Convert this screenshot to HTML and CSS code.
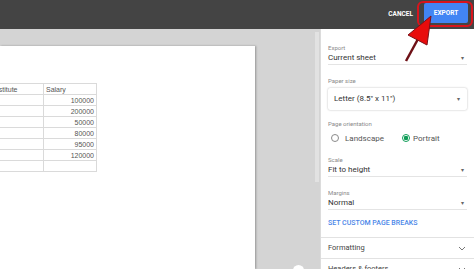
FILE: index.html
```html
<!doctype html>
<html lang="en">
<head>
	<meta charset="UTF-8">
	<title>Export</title>
	<link rel="stylesheet" href="styles.css">
</head>
<body>
	<div class="box">
		<header class="head">
			<span class="cancel">CANCEL</span>
			<span class="mark">
				<button class="export">EXPORT</button>
			</span>
		</header>

		<section class="main">
			<div class="preview">
				<div class="page_wrap">
					<div class="page">
						<table class="sheet">
							<tr><td class="name">Institute</td><td class="head_cell">Salary</td></tr>
							<tr><td class="name"></td><td class="num">100000</td></tr>
							<tr><td class="name"></td><td class="num">200000</td></tr>
							<tr><td class="name"></td><td class="num">50000</td></tr>
							<tr><td class="name"></td><td class="num">80000</td></tr>
							<tr><td class="name"></td><td class="num">95000</td></tr>
							<tr><td class="name"></td><td class="num">120000</td></tr>
							<tr><td class="name"></td><td class="num"></td></tr>
						</table>
					</div>
				</div>
				<div class="scroll"></div>
				<div class="fab"></div>
			</div>

			<aside class="panel">
				<div class="settings">
					<p class="label first">Export</p>
					<p class="select">Current sheet<span class="caret">&#9662;</span></p>

					<p class="label gap">Paper size</p>
					<p class="outlined">Letter (8.5" x 11")<span class="caret">&#9662;</span></p>

					<p class="label orient">Page orientation</p>
					<div class="radios">
						<span class="radio"></span><span class="radio_text">Landscape</span>
						<span class="radio on"></span><span class="radio_text">Portrait</span>
					</div>

					<p class="label scale">Scale</p>
					<p class="select">Fit to height<span class="caret">&#9662;</span></p>

					<p class="label gap">Margins</p>
					<p class="select">Normal<span class="caret">&#9662;</span></p>

					<p class="link">SET CUSTOM PAGE BREAKS</p>
				</div>
				<div class="section">Formatting
					<svg class="chevron" width="8" height="5" viewBox="0 0 8 5"><path d="M1 1 L4 4 L7 1" fill="none" stroke="#777" stroke-width="1"/></svg>
				</div>
				<div class="section">Headers &amp; footers
					<svg class="chevron" width="8" height="5" viewBox="0 0 8 5"><path d="M1 1 L4 4 L7 1" fill="none" stroke="#777" stroke-width="1"/></svg>
				</div>
			</aside>
		</section>

		<svg class="arrow" width="474" height="269" viewBox="0 0 474 269">
			<line x1="418" y1="39" x2="406" y2="61" stroke="#6e1016" stroke-width="2.5"/>
			<polygon points="431,16 408,35 427,45" fill="#e80c0c" stroke="#7a1218" stroke-width="1"/>
		</svg>
	</div>
</body>
</html>
```

FILE: styles.css
```css
*{
	padding: 0;
	margin: 0;
	box-sizing: border-box;
}
html,body{
	width: 100%;
	height: 100%;
	overflow: hidden;
	font-family: Roboto, "Liberation Sans", sans-serif;
}

.box{
	position: relative;
	height: 269px;
	width: 474px;
	display: flex;
	flex-direction: column;
}
.head{
	height: 29px;
	flex: none;
	background: #444444;
	display: flex;
	justify-content: flex-end;
	align-items: flex-start;
	padding: 1px 1px 0 0;
}
.cancel{
	color: #ffffff;
	font-size: 6.5px;
	font-weight: 700;
	line-height: 26px;
	margin-right: 4px;
}
.mark{
	border: 2.5px solid #d8141c;
	border-radius: 6px;
	padding: 0 3px 2px 5px;
}
.export{
	display: block;
	width: 44px;
	height: 20px;
	border: 0;
	border-radius: 2px;
	background: #4285f4;
	color: #ffffff;
	font-family: Roboto, "Liberation Sans", sans-serif;
	font-size: 6.5px;
	font-weight: 700;
	outline: 0;
}

.main{
	flex: 1;
	display: flex;
	min-height: 0;
}
.preview{
	position: relative;
	width: 320px;
	flex: none;
	background: #d4d4d4;
	display: flex;
	align-items: flex-start;
	overflow: hidden;
}
.page_wrap{
	padding-top: 17px;
	height: 100%;
}
.page{
	width: 255px;
	height: 100%;
	background: #ffffff;
	box-shadow: 1px 0 2px rgba(0,0,0,0.3);
	padding-top: 37px;
	overflow: hidden;
}
.sheet{
	border-collapse: collapse;
	margin-left: -17px;
	font-family: "Liberation Sans", Arial, sans-serif;
	font-size: 7px;
	color: #555555;
}
.sheet td{
	height: 11px;
	border: 1px solid #dadada;
	padding: 0 2px;
	line-height: 9px;
}
.name{
	width: 60px;
	padding-left: 9px !important;
}
.head_cell{
	width: 53px;
}
.num{
	text-align: right;
}
.scroll{
	margin: 3px 1px 0 auto;
	width: 4px;
	height: 150px;
	background: #e2e2e2;
}
.fab{
	position: absolute;
	left: 293px;
	top: 236px;
	width: 11px;
	height: 11px;
	border-radius: 50%;
	background: #ffffff;
}

.panel{
	flex: 1;
	background: #ffffff;
	border-left: 1px solid #dcdcdc;
	color: #333333;
}
.settings{
	padding: 15px 7px 9px 7px;
}
.label{
	font-size: 6px;
	line-height: 8px;
	color: #8a8a8a;
}
.gap{
	margin-top: 12px;
}
.orient{
	margin-top: 10px;
}
.scale{
	margin-top: 11px;
}
.select{
	position: relative;
	font-size: 8px;
	line-height: 12px;
	border-bottom: 1px solid #e4e4e4;
}
.caret{
	position: absolute;
	right: 3px;
	top: 0;
	font-size: 6px;
	color: #666666;
}
.outlined{
	position: relative;
	margin-top: 3px;
	height: 22px;
	line-height: 22px;
	font-size: 8px;
	padding-left: 6px;
	border-radius: 2px;
	box-shadow: 0 0 2px rgba(0,0,0,0.3);
}
.outlined .caret{
	right: 7px;
}
.radios{
	margin-top: 3px;
	height: 14px;
	display: flex;
	align-items: center;
	font-size: 8px;
	color: #555555;
	padding-left: 3px;
}
.radio{
	width: 8px;
	height: 8px;
	border: 1px solid #8a8a8a;
	border-radius: 50%;
	margin-right: 6px;
}
.radio.on{
	border-color: #0f9d58;
	background: radial-gradient(circle, #0f9d58 0, #0f9d58 2px, #ffffff 2.5px);
	margin-left: 4px;
	margin-right: 3px;
}
.radio_text{
	width: 53px;
}
.link{
	margin-top: 8px;
	font-size: 7px;
	line-height: 10px;
	font-weight: 500;
	color: #4a86e8;
}
.section{
	position: relative;
	height: 21px;
	line-height: 20px;
	border-top: 1px solid #e2e2e2;
	padding-left: 7px;
	font-size: 7.5px;
	color: #444444;
}
.chevron{
	position: absolute;
	right: 8px;
	top: 8px;
}

.arrow{
	position: absolute;
	left: 0;
	top: 0;
	pointer-events: none;
}
```
